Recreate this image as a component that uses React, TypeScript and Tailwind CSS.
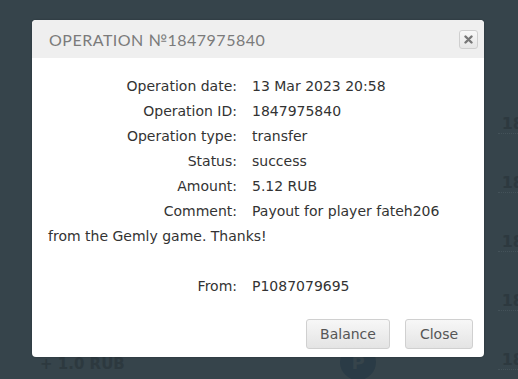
import React from "react";

const rows: [string, string][] = [
  ["Operation date:", "13 Mar 2023 20:58"],
  ["Operation ID:", "1847975840"],
  ["Operation type:", "transfer"],
  ["Status:", "success"],
  ["Amount:", "5.12 RUB"],
];

export default function App() {
  return (
    <div className="relative w-[518px] h-[379px] overflow-hidden bg-[#36444b]" style={{ fontFamily: "'DejaVu Sans', sans-serif" }}>
      {/* background page */}
      <div className="flex flex-col pt-[115px] items-end gap-[40px] mr-[-6px]">
        {[0, 1, 2, 3, 4].map((i) => (
          <div key={i} className="text-[16px] font-bold text-[#2d393f] border-b border-dotted border-[#445259] leading-[18px] pl-[4px]">18</div>
        ))}
      </div>
      <div className="absolute left-[40px] top-[353px] text-[15px] font-bold text-[#2d393f]">+ 1.0 RUB</div>
      <div className="absolute left-[340px] top-[344px] w-[36px] h-[36px] rounded-full bg-[#2a3b46] flex items-center justify-center text-[#36444b] font-bold text-[18px]">P</div>

      {/* modal */}
      <div className="absolute left-[32px] top-[20px] w-[452px] h-[337px] bg-white rounded-[4px] shadow-[0_0_2px_rgba(0,0,0,0.3)] flex flex-col">
        <div className="h-[38px] bg-[#efefef] rounded-t-[4px] flex items-center justify-between pl-[17px] pr-[6px]">
          <div className="text-[16px] tracking-[0.5px] text-[#7b7b7b] pt-[2px]" style={{ fontFamily: "Lato, sans-serif" }}>OPERATION №1847975840</div>
          <div className="w-[19px] h-[19px] rounded-[3px] border border-[#cfcfcf] bg-gradient-to-b from-[#f8f8f8] to-[#e6e6e6] flex items-center justify-center">
            <svg width="9" height="9" viewBox="0 0 9 9"><path d="M1.5 1.5 L7.5 7.5 M7.5 1.5 L1.5 7.5" stroke="#777" strokeWidth="2.4" strokeLinecap="round" /></svg>
          </div>
        </div>
        <div className="flex flex-col pt-[16px] text-[14px] text-[#333] pl-[16px] pr-[10px]">
          {rows.map(([l, v]) => (
            <div key={l} className="flex h-[25px] items-center">
              <div className="w-[189px] text-right">{l}</div>
              <div className="pl-[15px]">{v}</div>
            </div>
          ))}
          <div className="h-[25px] flex items-center">
            <div className="w-[189px] text-right">Comment:</div>
            <div className="pl-[15px]">Payout for player fateh206</div>
          </div>
          <div className="h-[25px] flex items-center">from the Gemly game. Thanks!</div>
          <div className="h-[25px]"></div>
          <div className="h-[25px] flex items-center">
            <div className="w-[189px] text-right">From:</div>
            <div className="pl-[15px]">P1087079695</div>
          </div>
        </div>
        <div className="flex justify-end gap-[15px] pr-[11px] pt-[20px]">
          <button className="w-[84px] h-[30px] rounded-[3px] border border-[#d0d0d0] bg-gradient-to-b from-[#f7f7f7] to-[#e4e4e4] text-[14px] text-[#555]">Balance</button>
          <button className="w-[68px] h-[30px] rounded-[3px] border border-[#d0d0d0] bg-gradient-to-b from-[#f7f7f7] to-[#e4e4e4] text-[14px] text-[#555]">Close</button>
        </div>
      </div>
    </div>
  );
}
